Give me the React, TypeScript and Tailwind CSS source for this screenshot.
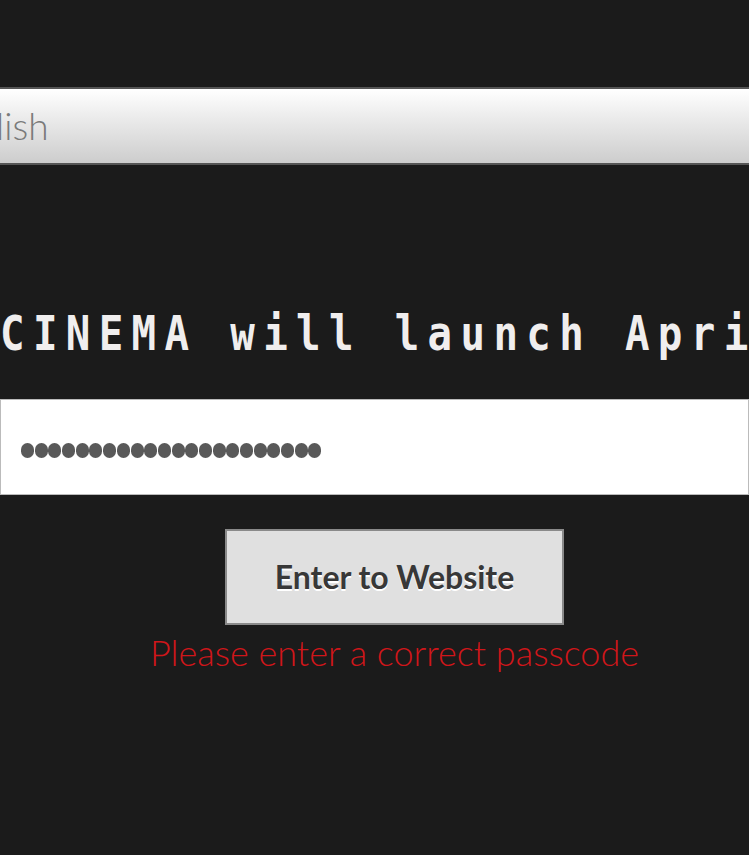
export default function App() {
  const dots = Array.from({ length: 22 });
  return (
    <div className="w-[749px] h-[855px] overflow-hidden bg-[#1b1b1b] font-['Lato',sans-serif]">
      <div className="pt-[87px]">
        <div className="h-[78px] border-t-2 border-b-2 border-[#555] bg-gradient-to-b from-white to-[#cdcdcd] flex items-center">
          <span className="ml-[-64px] text-[37px] font-light text-[#7a7a7a] whitespace-nowrap">English</span>
        </div>
      </div>

      <div className="mt-[144px] h-[48px] whitespace-nowrap">
        <span className="inline-block origin-left scale-x-[0.85] font-['DejaVu_Sans_Mono',monospace] font-bold text-[48px] leading-[48px] tracking-[9.8px] text-[#f0eeee]">
          CINEMA will launch April
        </span>
      </div>

      <div className="mt-[42px] h-[96px] bg-white border border-[#bbb] flex items-center gap-[0.7px] pl-[20px] pt-[6px]">
        {dots.map((_, i) => (
          <span key={i} className="w-[13px] h-[15px] rounded-full bg-[#595959] inline-block" />
        ))}
      </div>

      <div className="w-[789px] flex flex-col items-center">
        <button className="mt-[34px] w-[339px] h-[96px] bg-[#e0e0e0] border-2 border-[#8a8a8a] text-[32px] font-bold text-[#383838] [text-shadow:0_2px_0_#fff]">
          Enter to Website
        </button>
        <p className="mt-[9px] text-[36px] font-light text-[#d0161a] leading-[36px] whitespace-nowrap">
          Please enter a correct passcode
        </p>
      </div>
    </div>
  );
}
